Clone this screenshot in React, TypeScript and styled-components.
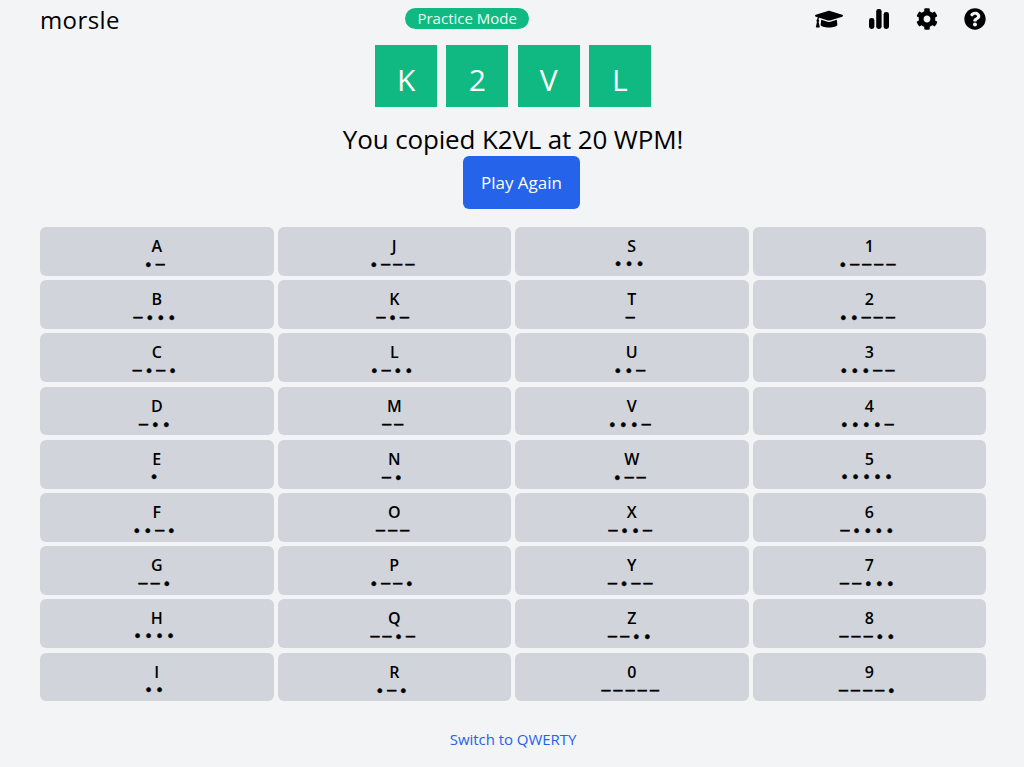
import React from "react";
import styled, { createGlobalStyle } from "styled-components";
import { FaGraduationCap, FaCog, FaQuestionCircle } from "react-icons/fa";

const Global = createGlobalStyle`
  html, body { margin: 0; padding: 0; background: #f3f4f6; }
  body { font-family: "Open Sans", "Noto Sans", sans-serif; color: #000; }
`;
const Page = styled.div`
  width: 1024px; height: 767px; box-sizing: border-box; overflow: hidden;
  padding: 0 38px 0 40px; display: flex; flex-direction: column; align-items: center;
`;
const Header = styled.header`
  width: 100%; display: flex; justify-content: space-between; align-items: flex-start;
  height: 45px;
`;
const Logo = styled.div`font-size: 24px; line-height: 40px; letter-spacing: 0.4px;`;
const Pill = styled.div`
  margin-top: 8px; width: 124px; height: 21px; border-radius: 11px; background: #10b981; color: #ecfdf5;
  font-size: 15px; line-height: 21px; text-align: center;
`;
const Icons = styled.nav`display: flex; gap: 26.5px; margin-top: 8px; align-items: center; height: 22px;`;
const IconWrap = styled.span<{ $w: number; $h: number }>`
  display: flex;
  svg { width: ${(p) => p.$w}px; height: ${(p) => p.$h}px; }
`;
const Tiles = styled.div`display: flex; gap: 9.2px;`;
const Tile = styled.div`
  width: 62px; height: 62px; background: #10b981; color: #fff; font-size: 30px; line-height: 70px; text-align: center;
`;
const Message = styled.div`font-size: 26px; line-height: 32px; margin-top: 16px; padding-bottom: 1px; letter-spacing: -0.15px;`;
const Again = styled.button`
  display: block; width: 117px; height: 53px; border: 0; border-radius: 6px; background: #2563eb; color: #fff;
  font: 17px "Open Sans", sans-serif; padding: 0; margin: 0 0 18px 17px;
`;
const Keys = styled.div`
  width: 100%; display: grid; grid-template-columns: repeat(4, 1fr); grid-template-rows: repeat(9, 48.8px);
  grid-auto-flow: column; column-gap: 4px; row-gap: 4.4px;
`;
const Key = styled.div`
  background: #d1d5db; border-radius: 6px; display: flex; flex-direction: column; align-items: center;
`;
const Letter = styled.div`font-size: 16px; font-weight: 600; line-height: 20px; margin-top: 9px;`;
const Code = styled.div`
  font-family: "Liberation Sans", sans-serif; font-size: 16px; line-height: 16px; white-space: nowrap;
`;
const Dash = styled.span`letter-spacing: 3.2px; vertical-align: 1px; -webkit-text-stroke: 0.6px #000;`;
const Dot = styled.span`
  letter-spacing: 5.4px; -webkit-text-stroke: 0.5px #000;
  ${Dash} + & { margin-left: 1.2px; }
  & + ${Dash} { margin-left: -0.8px; }
`;
const Switch = styled.a`
  margin-top: 28px; font-size: 15px; line-height: 20px; color: #2563eb; letter-spacing: -0.05px;
`;

const columns = ["ABCDEFGHI", "JKLMNOPQR", "STUVWXYZ0", "123456789"].join("");
const morse: Record<string, string> = {
  A: ".-", B: "-...", C: "-.-.", D: "-..", E: ".", F: "..-.", G: "--.", H: "....", I: "..",
  J: ".---", K: "-.-", L: ".-..", M: "--", N: "-.", O: "---", P: ".--.", Q: "--.-", R: ".-.",
  S: "...", T: "-", U: "..-", V: "...-", W: ".--", X: "-..-", Y: "-.--", Z: "--..", "0": "-----",
  "1": ".----", "2": "..---", "3": "...--", "4": "....-", "5": ".....", "6": "-....", "7": "--...", "8": "---..", "9": "----.",
};

const Bars = () => (
  <svg viewBox="0 0 20 20" fill="currentColor">
    <rect x="0" y="9" width="5.4" height="11" rx="2.4" />
    <rect x="7.2" y="0" width="5.4" height="20" rx="2.4" />
    <rect x="14.6" y="3" width="5.4" height="17" rx="2.4" />
  </svg>
);

export default function App() {
  return (
    <Page>
      <Global />
      <Header>
        <Logo>morsle</Logo>
        <Pill>Practice Mode</Pill>
        <Icons>
          <IconWrap $w={28} $h={22.4}><FaGraduationCap /></IconWrap>
          <IconWrap $w={20} $h={20}><Bars /></IconWrap>
          <IconWrap $w={22} $h={22}><FaCog /></IconWrap>
          <IconWrap $w={22} $h={22}><FaQuestionCircle /></IconWrap>
        </Icons>
      </Header>
      <Tiles>{["K", "2", "V", "L"].map((l) => <Tile key={l}>{l}</Tile>)}</Tiles>
      <Message>You copied K2VL at 20 WPM!</Message>
      <Again>Play Again</Again>
      <Keys>
        {columns.split("").map((l) => (
          <Key key={l}>
            <Letter>{l}</Letter>
            <Code>
              {morse[l].split("").map((s, i) => (s === "." ? <Dot key={i}>•</Dot> : <Dash key={i}>–</Dash>))}
            </Code>
          </Key>
        ))}
      </Keys>
      <Switch>Switch to QWERTY</Switch>
    </Page>
  );
}
